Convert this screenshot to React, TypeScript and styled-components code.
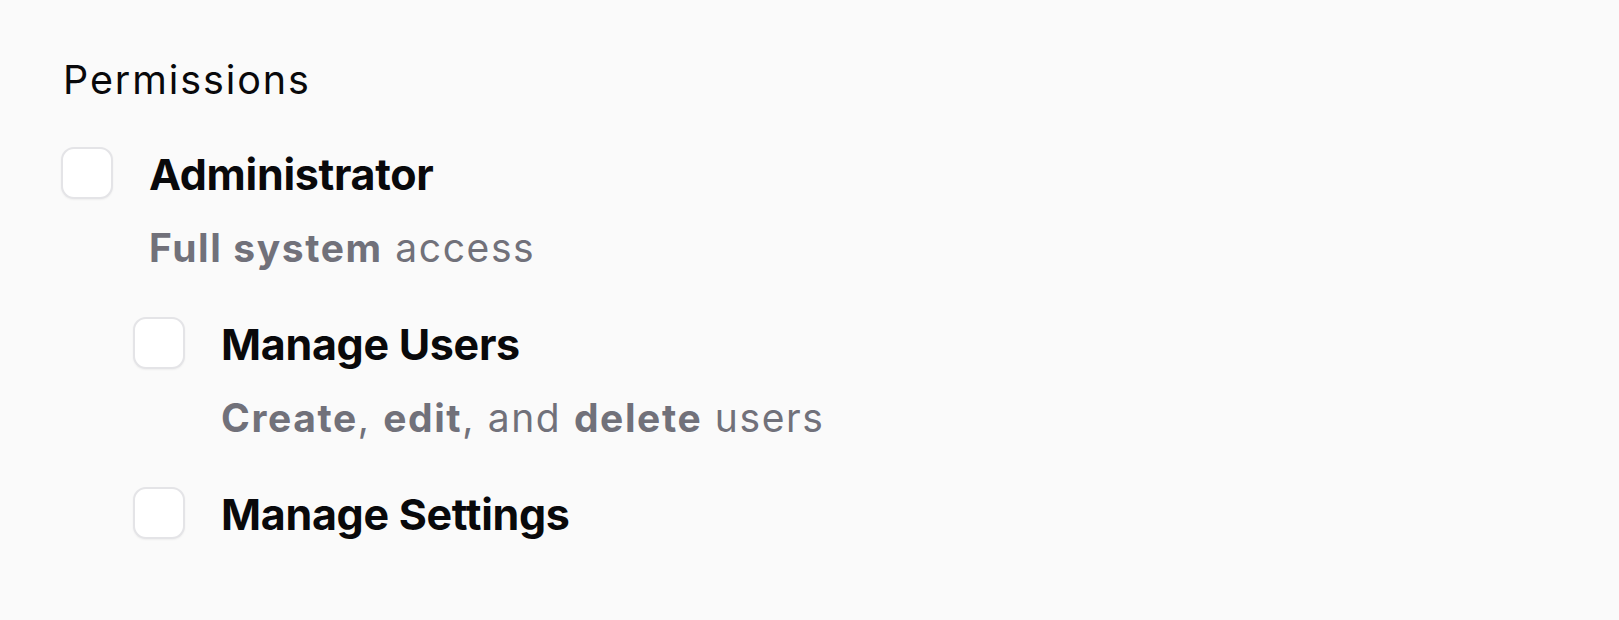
import React from "react";
import styled, { createGlobalStyle } from "styled-components";

const GlobalStyle = createGlobalStyle`
    html, body {
        margin: 0;
        padding: 0;
        background: #fafafa;
    }
    body {
        font-family: Inter, "Noto Sans", sans-serif;
        color: #09090b;
    }
`;

const Page = styled.div`
    min-height: 620px;
    padding: 56px 61px;
    box-sizing: border-box;
    display: flex;
    flex-direction: column;
    gap: 43px;
`;

const Heading = styled.h2`
    margin: 0 0 0 2px;
    font-size: 39.5px;
    line-height: 48px;
    font-weight: 400;
    letter-spacing: 1.9px;
    color: #09090b;
`;

const ItemList = styled.ul<{ $indent?: number }>`
    list-style: none;
    margin: 0;
    padding: 0 0 0 ${(p) => p.$indent ?? 0}px;
    display: flex;
    flex-direction: column;
    gap: 45px;
`;

const Item = styled.li`
    display: grid;
    grid-template-columns: 52px 1fr;
    column-gap: 36px;
    align-items: start;
`;

const Box = styled.span`
    width: 52px;
    height: 52px;
    box-sizing: border-box;
    border: 2px solid #e4e4e7;
    border-radius: 13px;
    background: #ffffff;
    box-shadow: 0 1px 2px rgba(0, 0, 0, 0.05);
`;

const Label = styled.span`
    font-size: 43px;
    font-weight: 700;
    line-height: 49px;
    padding-top: 3px;
    letter-spacing: -0.3px;
    color: #09090b;
    white-space: nowrap;
`;

const Description = styled.p`
    grid-column: 2;
    margin: 25px 0 0;
    font-size: 39px;
    line-height: 48px;
    font-weight: 400;
    letter-spacing: 1.6px;
    color: #71717a;
    white-space: nowrap;

    b {
        font-weight: 700;
    }
`;

const Children = styled.div`
    grid-column: 1 / -1;
    margin-top: 45px;
`;

interface PermissionProps {
    label: string;
    description?: React.ReactNode;
    children?: React.ReactNode;
}

const Permission: React.FC<PermissionProps> = ({ label, description, children }) => (
    <Item>
        <Box role="checkbox" aria-checked="false" />
        <Label>{label}</Label>
        {description && <Description>{description}</Description>}
        {children && <Children>{children}</Children>}
    </Item>
);

export default function App(): React.ReactElement {
    return (
        <>
            <GlobalStyle />
            <Page>
                <Heading>Permissions</Heading>
                <ItemList>
                    <Permission
                        label="Administrator"
                        description={
                            <>
                                <b>Full system</b> access
                            </>
                        }
                    >
                        <ItemList $indent={72}>
                            <Permission
                                label="Manage Users"
                                description={
                                    <>
                                        <b>Create</b>, <b>edit</b>, and <b>delete</b> users
                                    </>
                                }
                            />
                            <Permission label="Manage Settings" />
                        </ItemList>
                    </Permission>
                </ItemList>
            </Page>
        </>
    );
}
